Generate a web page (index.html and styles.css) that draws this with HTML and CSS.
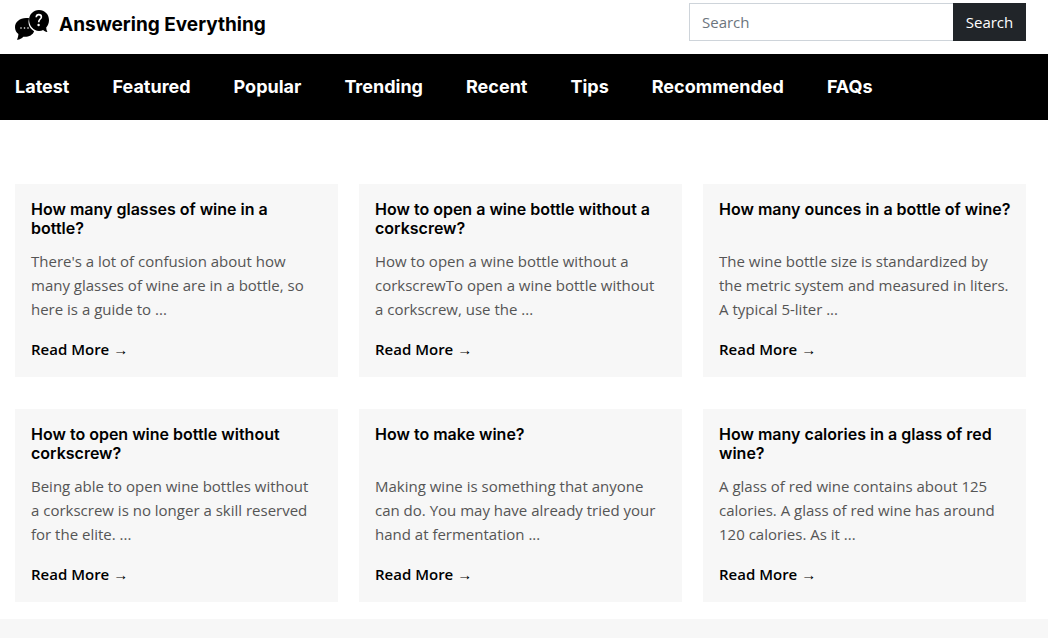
FILE: index.html
```html
<!DOCTYPE html>
<html lang="en">
<head>
<meta charset="utf-8">
<meta name="viewport" content="width=device-width, initial-scale=1">
<title>Answering Everything</title>
<link rel="stylesheet" href="styles.css">
</head>
<body>
<header class="header">
  <a class="brand" href="#">
    <svg class="brand-icon" viewBox="0 0 34 30" aria-hidden="true">
      <path d="M11 8C4.800 8 0 12 0 17.200c0 3 1.400 5.300 3.400 6.900-.1 2-.5 3.900-1.400 5.600 2.400.2 4.700-1.300 6.300-3 4.600.6 9.500-1.400 10.800-5.500-3.600-2.100-5.800-5.500-5.600-9.900.1-1.300.4-2.400.8-3.100C13.300 8.100 12.200 8 11 8z"/>
      <path d="M24 0c-5.600 0-9.900 4.400-9.900 10s4.400 11 9.900 11c1.600 0 3-.3 4.100-.9 1.200 1.300 2.600 1.900 4.300 1.800-.8-1.300-1.200-2.900-1.200-4.300 1.700-1.700 2.800-4.600 2.800-7.600 0-5.600-4.300-10-10-10z"/>
      <g fill="#fff"><circle cx="6" cy="18" r=".8"/><circle cx="9.500" cy="18" r=".8"/><circle cx="13" cy="18" r=".8"/><circle cx="23.600" cy="15" r="1.200"/></g>
      <path d="M21.200 7.200c.1-1.700 1.100-2.600 2.600-2.600s2.600.9 2.600 2.300c0 2.200-2.700 2.200-2.700 5.300" fill="none" stroke="#fff" stroke-width="1.600"/>
    </svg>
    <span>Answering Everything</span>
  </a>
  <form class="search">
    <input class="search-input" type="search" placeholder="Search" aria-label="Search">
    <button class="search-button" type="submit">Search</button>
  </form>
</header>
<nav class="nav" aria-label="Main">
  <a href="#">Latest</a>
  <a href="#">Featured</a>
  <a href="#">Popular</a>
  <a href="#">Trending</a>
  <a href="#">Recent</a>
  <a href="#">Tips</a>
  <a href="#">Recommended</a>
  <a href="#">FAQs</a>
</nav>
<main class="cards">
  <article class="card">
    <h2>How many glasses of wine in a bottle?</h2>
    <p>There's a lot of confusion about how many glasses of wine are in a bottle, so here is a guide to ...</p>
    <a href="#">Read More <span class="arrow">→</span></a>
  </article>
  <article class="card">
    <h2>How to open a wine bottle without a corkscrew?</h2>
    <p>How to open a wine bottle without a corkscrewTo open a wine bottle without a&nbsp;corkscrew, use the ...</p>
    <a href="#">Read More <span class="arrow">→</span></a>
  </article>
  <article class="card">
    <h2>How many ounces in a bottle of wine?</h2>
    <p>The wine bottle size is standardized by the metric system and measured in liters. A typical 5-liter ...</p>
    <a href="#">Read More <span class="arrow">→</span></a>
  </article>
  <article class="card">
    <h2>How to open wine bottle without corkscrew?</h2>
    <p>Being able to open wine bottles without a&nbsp;corkscrew is no longer a skill reserved for the elite. ...</p>
    <a href="#">Read More <span class="arrow">→</span></a>
  </article>
  <article class="card">
    <h2>How to make wine?</h2>
    <p>Making wine is something that anyone can do. You may have already tried your hand at fermentation ...</p>
    <a href="#">Read More <span class="arrow">→</span></a>
  </article>
  <article class="card">
    <h2>How many calories in a glass of red wine?</h2>
    <p>A glass of red wine contains about 125 calories. A glass of red wine has around 120 calories. As it ...</p>
    <a href="#">Read More <span class="arrow">→</span></a>
  </article>
</main>
<footer class="footer"></footer>
</body>
</html>
```

FILE: styles.css
```css
* {
  box-sizing: border-box;
}

body {
  margin: 0;
  min-height: 100vh;
  display: flex;
  flex-direction: column;
  background: #fff;
  color: #000;
  font: 15px/24px "Open Sans", "Noto Sans", sans-serif;
}

a {
  color: inherit;
  text-decoration: none;
}

.header {
  display: flex;
  justify-content: space-between;
  align-items: flex-start;
  padding: 3px 22px 13px 15px;
}

.brand {
  display: flex;
  align-items: center;
  gap: 10px;
  padding-top: 7px;
  font: 700 19px/30px Inter, sans-serif;
}

.brand-icon {
  width: 34px;
  height: 30px;
}

.search {
  display: flex;
  width: 337px;
}

.search-input {
  flex: 1;
  min-width: 0;
  height: 38px;
  padding: 0 12px;
  border: 1px solid #ced4da;
  border-right: 0;
  border-radius: 0;
  background: #fff;
  color: #212529;
  font: inherit;
  appearance: none;
}

.search-input::placeholder {
  color: #6c757d;
}

.search-button {
  width: 73px;
  padding: 0;
  border: 0;
  background: #212529;
  color: #fff;
  font: inherit;
}

.nav {
  display: flex;
  flex-wrap: wrap;
  gap: 12px 43px;
  padding: 21px 15px;
  background: #000;
  color: #fff;
  font: 700 18px/24px Inter, sans-serif;
}

.cards {
  display: grid;
  grid-template-columns: repeat(auto-fill, minmax(300px, 1fr));
  gap: 32px 21px;
  padding: 64px 22px 17px 15px;
}

.card {
  padding: 16px 14px 16px 16px;
  background: #f7f7f7;
}

.card h2 {
  min-height: 38px;
  margin: 0 0 11px;
  font: 600 16px/19px Inter, sans-serif;
}

.card p {
  margin: 0 0 16px;
  color: #555;
}

.card a {
  font-weight: 600;
}

.arrow {
  font: 15px/20px "Liberation Sans", sans-serif;
}

.footer {
  flex: 1;
  background: #f7f7f7;
}
```
